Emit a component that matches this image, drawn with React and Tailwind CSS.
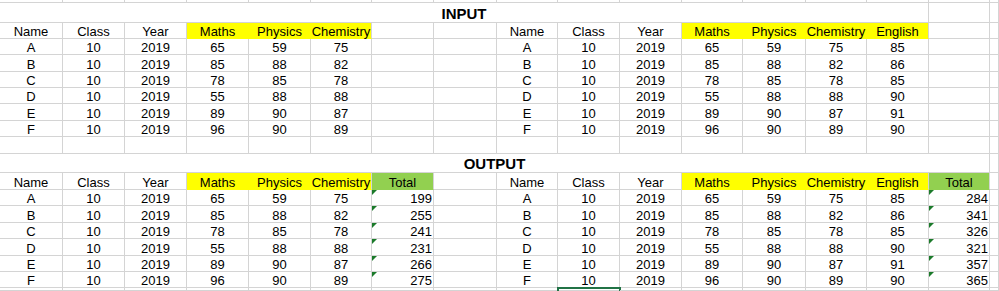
import React from "react";

const left = [
  ["A", "10", "2019", "65", "59", "75", "85", "199", "284"],
  ["B", "10", "2019", "85", "88", "82", "86", "255", "341"],
  ["C", "10", "2019", "78", "85", "78", "85", "241", "326"],
  ["D", "10", "2019", "55", "88", "88", "90", "231", "321"],
  ["E", "10", "2019", "89", "90", "87", "91", "266", "357"],
  ["F", "10", "2019", "96", "90", "89", "90", "275", "365"],
];

const YELLOW = "bg-[#ffff00] border-r-[#ffff00] border-b-[#ffff00]";
const YELLOW_END = "bg-[#ffff00] border-b-[#ffff00]";
const GREEN = "bg-[#92d050] border-b-[#92d050]";

function Cell({ children, span, fill = "", align = "center", tri = false, sel = false }) {
  const justify = align === "right" ? "justify-end pr-px" : "justify-center";
  return (
    <div
      className={`relative flex items-end border-r border-b border-[#d4d4d4] ${justify} ${span || ""} ${fill}`}
    >
      {children !== undefined && (
        <span className="whitespace-nowrap leading-[12px]">{children}</span>
      )}
      {tri && (
        <svg className="absolute left-0 top-0" width="5" height="5" viewBox="0 0 5 5">
          <polygon points="0,0 5,0 0,5" fill="#1b7a2a" />
        </svg>
      )}
      {sel && (
        <div className="absolute -left-px -top-px w-[64px] h-[20px] border-2 border-[#217346]" />
      )}
    </div>
  );
}

function blankRow(key, selCol = -1) {
  return Array.from({ length: 17 }, (_, i) => (
    <Cell key={`${key}-${i}`} sel={i === selCol} />
  ));
}

function headerRow(key, withTotal) {
  const cells = [];
  const push = (el) => cells.push(el);
  push(<Cell key={`${key}-0`}>Name</Cell>);
  push(<Cell key={`${key}-1`}>Class</Cell>);
  push(<Cell key={`${key}-2`}>Year</Cell>);
  push(<Cell key={`${key}-3`} fill={YELLOW}>Maths</Cell>);
  push(<Cell key={`${key}-4`} fill={YELLOW}>Physics</Cell>);
  push(<Cell key={`${key}-5`} fill={YELLOW_END}>Chemistry</Cell>);
  push(withTotal ? <Cell key={`${key}-6`} fill={GREEN}>Total</Cell> : <Cell key={`${key}-6`} />);
  push(<Cell key={`${key}-7`} />);
  push(<Cell key={`${key}-8`}>Name</Cell>);
  push(<Cell key={`${key}-9`}>Class</Cell>);
  push(<Cell key={`${key}-10`}>Year</Cell>);
  push(<Cell key={`${key}-11`} fill={YELLOW}>Maths</Cell>);
  push(<Cell key={`${key}-12`} fill={YELLOW}>Physics</Cell>);
  push(<Cell key={`${key}-13`} fill={YELLOW}>Chemistry</Cell>);
  push(<Cell key={`${key}-14`} fill={YELLOW_END}>English</Cell>);
  push(withTotal ? <Cell key={`${key}-15`} fill={GREEN}>Total</Cell> : <Cell key={`${key}-15`} />);
  push(<Cell key={`${key}-16`} />);
  return cells;
}

function dataRow(key, d, withTotal) {
  const [n, c, y, m, p, ch, en, tl, tr] = d;
  return [
    <Cell key={`${key}-0`}>{n}</Cell>,
    <Cell key={`${key}-1`}>{c}</Cell>,
    <Cell key={`${key}-2`}>{y}</Cell>,
    <Cell key={`${key}-3`}>{m}</Cell>,
    <Cell key={`${key}-4`}>{p}</Cell>,
    <Cell key={`${key}-5`}>{ch}</Cell>,
    withTotal ? (
      <Cell key={`${key}-6`} align="right" tri>{tl}</Cell>
    ) : (
      <Cell key={`${key}-6`} />
    ),
    <Cell key={`${key}-7`} />,
    <Cell key={`${key}-8`}>{n}</Cell>,
    <Cell key={`${key}-9`}>{c}</Cell>,
    <Cell key={`${key}-10`}>{y}</Cell>,
    <Cell key={`${key}-11`}>{m}</Cell>,
    <Cell key={`${key}-12`}>{p}</Cell>,
    <Cell key={`${key}-13`}>{ch}</Cell>,
    <Cell key={`${key}-14`}>{en}</Cell>,
    withTotal ? (
      <Cell key={`${key}-15`} align="right" tri>{tr}</Cell>
    ) : (
      <Cell key={`${key}-15`} />
    ),
    <Cell key={`${key}-16`} />,
  ];
}

export default function App() {
  return (
    <div className="w-[999px] h-[291px] overflow-hidden bg-white text-black font-['Liberation_Sans',Arial,sans-serif] text-[13px]">
      <div className="grid grid-cols-[63px_62px_62px_62px_62px_61px_62px_63px_61px_62px_62px_61px_63px_61px_62px_61px_9px] grid-rows-[3px_20px_16px_16px_17px_16px_16px_17px_16px_17px_19px_17px_16px_17px_16px_17px_16px_16px_3px]">
        {blankRow("r0")}

        <div className="col-span-15 flex items-end justify-center pb-px border-r border-b border-[#d4d4d4]">
          <span className="font-bold text-[15px] leading-[15px]">INPUT</span>
        </div>
        <Cell key="t1-15" />
        <Cell key="t1-16" />

        {headerRow("h1", false)}
        {left.map((d, i) => dataRow(`d1-${i}`, d, false))}

        {blankRow("r9")}

        <div className="col-span-16 flex items-end justify-center pb-px border-r border-b border-[#d4d4d4]">
          <span className="font-bold text-[15px] leading-[15px]">OUTPUT</span>
        </div>
        <Cell key="t2-16" />

        {headerRow("h2", true)}
        {left.map((d, i) => dataRow(`d2-${i}`, d, true))}

        {blankRow("r18", 9)}
      </div>
    </div>
  );
}
